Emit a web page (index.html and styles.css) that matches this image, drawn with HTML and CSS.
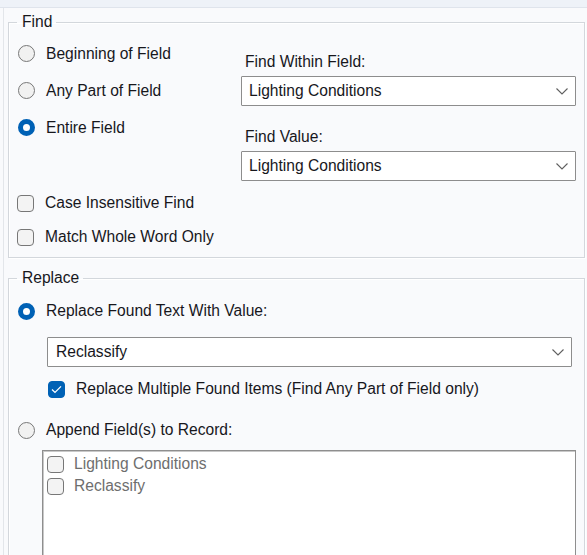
FILE: index.html
```html
<!DOCTYPE html>
<html>
<head>
<meta charset="utf-8">
<link rel="stylesheet" href="styles.css">
</head>
<body>
<div class="topbar"></div>
<div class="page">
  <fieldset class="group find">
    <legend>Find</legend>
    <div class="find-grid">
      <div class="options">
        <div class="opt"><span class="radio"></span><span>Beginning of Field</span></div>
        <div class="opt"><span class="radio"></span><span>Any Part of Field</span></div>
        <div class="opt"><span class="radio on"></span><span>Entire Field</span></div>
      </div>
      <div class="fields">
        <div class="lbl first">Find Within Field:</div>
        <div class="combo"><span>Lighting Conditions</span><svg class="chev" width="12" height="7" viewBox="0 0 12 7"><path d="M0.5 0.5 L6 6 L11.5 0.5" fill="none" stroke="#5f5f5f" stroke-width="1.1"/></svg></div>
        <div class="lbl second">Find Value:</div>
        <div class="combo"><span>Lighting Conditions</span><svg class="chev" width="12" height="7" viewBox="0 0 12 7"><path d="M0.5 0.5 L6 6 L11.5 0.5" fill="none" stroke="#5f5f5f" stroke-width="1.1"/></svg></div>
      </div>
    </div>
    <div class="checks">
      <div class="chk-row"><span class="box"></span><span>Case Insensitive Find</span></div>
      <div class="chk-row"><span class="box"></span><span>Match Whole Word Only</span></div>
    </div>
  </fieldset>

  <fieldset class="group replace">
    <legend>Replace</legend>
    <div class="opt r1"><span class="radio on"></span><span>Replace Found Text With Value:</span></div>
    <div class="combo rcombo"><span>Reclassify</span><svg class="chev" width="12" height="7" viewBox="0 0 12 7"><path d="M0.5 0.5 L6 6 L11.5 0.5" fill="none" stroke="#5f5f5f" stroke-width="1.1"/></svg></div>
    <div class="chk-row multi"><span class="box on"><svg width="11" height="9" viewBox="0 0 11 9"><path d="M1 4.6 L4 7.4 L10 1.4" fill="none" stroke="#ffffff" stroke-width="1.3"/></svg></span><span>Replace Multiple Found Items (Find Any Part of Field only)</span></div>
    <div class="opt r2"><span class="radio"></span><span>Append Field(s) to Record:</span></div>
    <div class="list">
      <div class="item"><span class="box"></span><span>Lighting Conditions</span></div>
      <div class="item"><span class="box"></span><span>Reclassify</span></div>
    </div>
  </fieldset>
</div>
</body>
</html>
```

FILE: styles.css
```css
html, body {
  margin: 0;
  padding: 0;
}
body {
  width: 587px;
  height: 555px;
  overflow: hidden;
  background: #f9fafc;
  font-family: "Liberation Sans", Arial, sans-serif;
  font-size: 15.6px;
  color: #17171c;
}
.topbar {
  height: 7px;
  background: #eef2f8;
  border-bottom: 1px solid #dfe4ec;
}
.page {
  margin-left: 3px;
  border-left: 1px solid #e3e6ea;
  height: 547px;
  overflow: hidden;
}
.group {
  margin: 0 2px 0 4px;
  border: 1px solid #d3d7dc;
  box-shadow: inset 1px 1px 0 #ffffff, 1px 1px 0 #ffffff;
  padding: 4px 8px 3px 8px;
  min-width: 0;
}
.group legend {
  padding: 0 4px 0 5px;
  line-height: 18px;
}
.find {
  margin-top: 5px;
}
.replace {
  margin-top: 11px;
  padding-top: 6px;
  padding-bottom: 0;
}
.find-grid {
  display: grid;
  grid-template-columns: 224px 1fr;
}
.opt {
  height: 37px;
  display: flex;
  align-items: center;
  gap: 11px;
  padding-left: 1px;
}
.radio {
  width: 17px;
  height: 17px;
  box-sizing: border-box;
  border-radius: 50%;
  border: 1px solid #777777;
  background: #f1f1f1;
  flex: none;
}
.radio.on {
  border: 5.5px solid #0061b5;
  background: #ffffff;
}
.fields {
  padding-top: 18px;
}
.lbl {
  line-height: 18px;
  padding-left: 4px;
}
.lbl.second {
  margin-top: 22px;
}
.combo {
  margin-top: 5px;
  height: 30px;
  box-sizing: border-box;
  background: #ffffff;
  border: 1px solid #8d8d8d;
  border-radius: 1px;
  display: flex;
  align-items: center;
  justify-content: space-between;
  padding: 0 7px 0 7px;
}
.chev {
  display: block;
}
.checks {
  margin-top: 5px;
}
.chk-row {
  height: 34px;
  display: flex;
  align-items: center;
  gap: 11px;
}
.box {
  width: 17px;
  height: 17px;
  box-sizing: border-box;
  border: 1px solid #777777;
  border-radius: 4px;
  background: #f3f3f3;
  flex: none;
  display: flex;
  align-items: center;
  justify-content: center;
}
.box.on {
  background: #0061b5;
  border-color: #0061b5;
}
.r1 {
  height: 36px;
}
.rcombo {
  margin: 8px 4px 0 30px;
  padding-left: 8px;
}
.multi {
  margin-top: 5px;
  margin-left: 31px;
}
.r2 {
  height: 36px;
  margin-top: 6px;
}
.list {
  margin: 2px 0 0 25px;
  height: 130px;
  background: #ffffff;
  border: 1px solid #8e8e8e;
  box-shadow: inset 1px 1px 0 #c8c8c8;
  padding: 2px 4px;
}
.item {
  height: 22px;
  display: flex;
  align-items: center;
  gap: 10px;
  color: #6e6e6e;
}
```
